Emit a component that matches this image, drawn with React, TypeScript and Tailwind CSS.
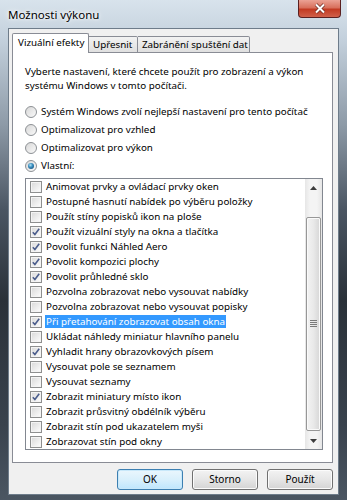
import React from "react";

const items: { label: string; checked: boolean; selected?: boolean }[] = [
  { label: "Animovat prvky a ovládací prvky oken", checked: false },
  { label: "Postupné hasnutí nabídek po výběru položky", checked: false },
  { label: "Použít stíny popisků ikon na ploše", checked: false },
  { label: "Použít vizuální styly na okna a tlačítka", checked: true },
  { label: "Povolit funkci Náhled Aero", checked: true },
  { label: "Povolit kompozici plochy", checked: true },
  { label: "Povolit průhledné sklo", checked: true },
  { label: "Pozvolna zobrazovat nebo vysouvat nabídky", checked: false },
  { label: "Pozvolna zobrazovat nebo vysouvat popisky", checked: false },
  { label: "Při přetahování zobrazovat obsah okna", checked: true, selected: true },
  { label: "Ukládat náhledy miniatur hlavního panelu", checked: false },
  { label: "Vyhladit hrany obrazovkových písem", checked: true },
  { label: "Vysouvat pole se seznamem", checked: false },
  { label: "Vysouvat seznamy", checked: false },
  { label: "Zobrazit miniatury místo ikon", checked: true },
  { label: "Zobrazit průsvitný obdélník výběru", checked: false },
  { label: "Zobrazit stín pod ukazatelem myši", checked: false },
  { label: "Zobrazovat stín pod okny", checked: false },
];

const radios = [
  { label: "Systém Windows zvolí nejlepší nastavení pro tento počítač", on: false },
  { label: "Optimalizovat pro vzhled", on: false },
  { label: "Optimalizovat pro výkon", on: false },
  { label: "Vlastní:", on: true },
];

function Radio({ on }: { on: boolean }) {
  return (
    <svg width="12" height="12" viewBox="0 0 12 12" className="shrink-0">
      <defs>
        <linearGradient id="rf" x1="0" y1="0" x2="1" y2="1">
          <stop offset="0" stopColor="#d6d6d6" />
          <stop offset="1" stopColor="#fbfbfb" />
        </linearGradient>
        <radialGradient id="rd" cx="0.4" cy="0.35" r="0.7">
          <stop offset="0" stopColor="#b6e5f6" />
          <stop offset="0.5" stopColor="#3c8fc0" />
          <stop offset="1" stopColor="#1c5a86" />
        </radialGradient>
      </defs>
      <circle cx="6" cy="6" r="5.5" fill="url(#rf)" stroke="#8d9195" />
      {on && <circle cx="6" cy="6" r="3" fill="url(#rd)" />}
    </svg>
  );
}

function Check({ checked }: { checked: boolean }) {
  return (
    <svg width="12" height="12" viewBox="0 0 12 12" className="shrink-0">
      <defs>
        <linearGradient id="cf" x1="0" y1="0" x2="1" y2="1">
          <stop offset="0" stopColor="#dcdcdc" />
          <stop offset="1" stopColor="#fafafa" />
        </linearGradient>
      </defs>
      <rect x="0.5" y="0.5" width="11" height="11" fill="#f4f4f4" stroke="#8e8f8f" />
      <rect x="2" y="2" width="8" height="8" fill="url(#cf)" />
      {checked && (
        <path d="M2.8 6.2 L4.9 8.6 L9.2 2.8" fill="none" stroke="#4b5d8c" strokeWidth="1.6" />
      )}
    </svg>
  );
}

function Btn({ label, def }: { label: string; def?: boolean }) {
  return (
    <button
      className={
        "w-[66px] h-[21px] rounded-[3px] border text-[10px] text-black bg-gradient-to-b " +
        (def
          ? "border-[#3c7fb1] from-[#eaf6fd] via-[#d9f0fc] to-[#bee6fd] shadow-[inset_0_0_0_1px_#c8e8fa]"
          : "border-[#707070] from-[#f3f3f3] via-[#e6e6e6] to-[#d4d4d4] shadow-[inset_0_0_0_1px_#fbfbfb]")
      }
    >
      {label}
    </button>
  );
}

export default function App() {
  return (
    <div
      className="w-[347px] h-[500px] flex flex-col overflow-hidden text-black text-[9.8px] bg-[linear-gradient(180deg,#d8e3ec_0%,#c3d0dc_8%,#8d9aa7_25%,#4a5562_42%,#2a3139_60%,#39424d_85%,#4b5662_100%)]"
      style={{ fontFamily: '"Segoe UI", "Noto Sans", sans-serif' }}
    >
      {/* title bar */}
      <div className="h-[28px] flex items-start shrink-0">
        <div className="pl-[8px] pt-[7px] text-[11.5px] leading-[16px] whitespace-nowrap [text-shadow:0_0_6px_#ffffff,0_0_3px_#ffffff]">
          Možnosti výkonu
        </div>
        <div className="ml-auto mr-[6px] w-[43px] h-[18px] rounded-b-[4px] border border-t-0 border-[#5a2020] bg-[linear-gradient(180deg,#eba294_0%,#d8705c_45%,#c23a22_55%,#d0604a_100%)] flex items-center justify-center">
          <svg width="12" height="11" viewBox="0 0 12 11">
            <path d="M2 1.5 L10 9.5 M10 1.5 L2 9.5" stroke="#6b2a22" strokeWidth="3.4" />
            <path d="M2 1.5 L10 9.5 M10 1.5 L2 9.5" stroke="#ffffff" strokeWidth="2" />
          </svg>
        </div>
      </div>

      {/* client */}
      <div className="mx-[8px] mb-[5px] flex-1 bg-[#f0f0f0] border border-[#6e7c8a] flex flex-col pl-[3px] pr-[5px]">
        <div className="flex items-end h-[24px] relative z-10 whitespace-nowrap">
          <div className="h-[20px] w-[77px] bg-white border border-b-0 border-[#898c95] rounded-t-[2px] pl-[5px] leading-[18px]">
            Vizuální efekty
          </div>
          <div className="h-[17px] w-[49px] border border-l-0 border-[#898c95] rounded-tr-[2px] bg-gradient-to-b from-[#f2f2f2] to-[#e0e0e0] pl-[4px] leading-[15px]">
            Upřesnit
          </div>
          <div className="h-[17px] w-[112px] border border-l-0 border-[#898c95] rounded-tr-[2px] bg-gradient-to-b from-[#f2f2f2] to-[#e0e0e0] pl-[4px] leading-[15px]">
            Zabránění spuštění dat
          </div>
        </div>

        <div className="-mt-px h-[411px] bg-white border border-[#898c95] pl-[12px] pr-[9px] pt-[12px]">
          <p className="leading-[14px] whitespace-nowrap">
            Vyberte nastavení, které chcete použít pro zobrazení a výkon
            <br />
            systému Windows v tomto počítači.
          </p>

          <div className="mt-[10px] flex flex-col whitespace-nowrap">
            {radios.map((r) => (
              <div key={r.label} className="h-[18px] flex items-center gap-[4px]">
                <Radio on={r.on} />
                <span className="leading-[14px]">{r.label}</span>
              </div>
            ))}
          </div>

          <div className="mt-[3px] h-[272px] border border-[#828790] flex bg-white">
            <div className="flex-1 flex flex-col pl-[4px] whitespace-nowrap">
              {items.map((it) => (
                <div key={it.label} className="h-[15px] flex items-center gap-[3px]">
                  <Check checked={it.checked} />
                  <span
                    className={
                      "leading-[13px] px-[1px] " +
                      (it.selected ? "bg-[#3399ff] text-white" : "")
                    }
                  >
                    {it.label}
                  </span>
                </div>
              ))}
            </div>

            {/* scrollbar */}
            <div className="w-[17px] flex flex-col bg-[linear-gradient(90deg,#e6e6e6,#f4f4f4_30%,#f4f4f4_70%,#e6e6e6)]">
              <div className="h-[17px] flex items-center justify-center">
                <svg width="7" height="4" viewBox="0 0 7 4">
                  <path d="M0 4 L3.5 0 L7 4 Z" fill="#3c3c3c" />
                </svg>
              </div>
              <div className="flex-1 flex flex-col pt-[21px] pb-[1px]">
                <div className="flex-1 mx-[1px] rounded-[2px] border border-[#979797] bg-[linear-gradient(90deg,#f3f3f3,#e9e9e9_50%,#d6d6d6)] shadow-[inset_0_0_0_1px_#fafafa] flex items-center justify-center">
                  <svg width="7" height="8" viewBox="0 0 7 8">
                    <path d="M0 0.5 H7 M0 2.5 H7 M0 4.5 H7 M0 6.5 H7" stroke="#7a7a7a" strokeWidth="1" />
                  </svg>
                </div>
              </div>
              <div className="h-[17px] flex items-center justify-center">
                <svg width="7" height="4" viewBox="0 0 7 4">
                  <path d="M0 0 L7 0 L3.5 4 Z" fill="#3c3c3c" />
                </svg>
              </div>
            </div>
          </div>
        </div>

        <div className="mt-[6px] flex justify-end gap-[9px]">
          <Btn label="OK" def />
          <Btn label="Storno" />
          <Btn label="Použít" />
        </div>
      </div>
    </div>
  );
}
